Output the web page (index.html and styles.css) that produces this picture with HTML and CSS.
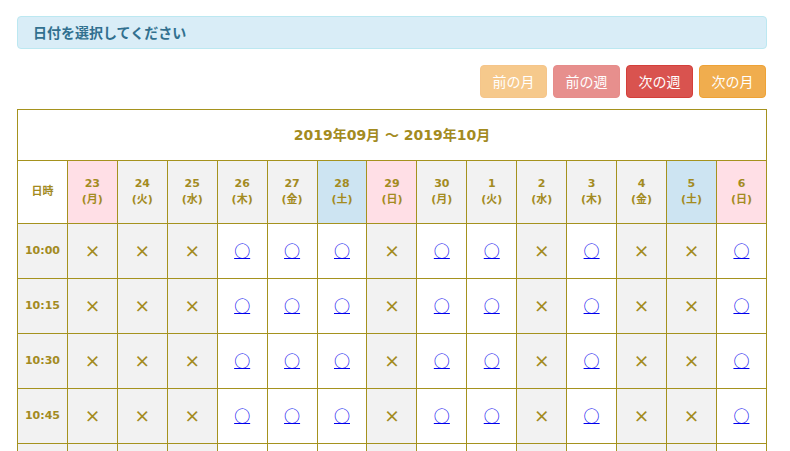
FILE: index.html
```html
<!DOCTYPE html>
<html lang="ja">
<head>
<meta charset="utf-8">
<link rel="stylesheet" href="styles.css">
</head>
<body>
<div class="page">
  <div class="alert">日付を選択してください</div>
  <div class="nav">
    <span class="btn btn-prev-month">前の月</span>
    <span class="btn btn-prev-week">前の週</span>
    <span class="btn btn-next-week">次の週</span>
    <span class="btn btn-next-month">次の月</span>
  </div>
  <table class="cal">
    <tr class="title-row"><th colspan="15">2019年09月 ～ 2019年10月</th></tr>
    <tr class="head-row">
      <th class="corner">日時</th>
      <th class="hol">23<br>(月)</th>
      <th>24<br>(火)</th>
      <th>25<br>(水)</th>
      <th>26<br>(木)</th>
      <th>27<br>(金)</th>
      <th class="sat">28<br>(土)</th>
      <th class="hol">29<br>(日)</th>
      <th>30<br>(月)</th>
      <th>1<br>(火)</th>
      <th>2<br>(水)</th>
      <th>3<br>(木)</th>
      <th>4<br>(金)</th>
      <th class="sat">5<br>(土)</th>
      <th class="hol">6<br>(日)</th>
    </tr>
  </table>
</div>
<script>
(function () {
  var pattern = [0,0,0,1,1,1,0,1,1,0,1,0,0,1];
  var times = ["10:00","10:15","10:30","10:45",""];
  var table = document.querySelector(".cal");
  times.forEach(function (t) {
    var tr = document.createElement("tr");
    tr.className = "slot-row";
    var th = document.createElement("th");
    th.className = "time";
    th.textContent = t;
    tr.appendChild(th);
    pattern.forEach(function (p) {
      var td = document.createElement("td");
      if (p) {
        td.className = "open";
        if (t) {
          var a = document.createElement("a");
          a.href = "#";
          a.textContent = "○";
          td.appendChild(a);
        }
      } else {
        td.className = "closed";
        if (t) td.textContent = "×";
      }
      tr.appendChild(td);
    });
    table.appendChild(tr);
  });
})();
</script>
</body>
</html>
```

FILE: styles.css
```css
html, body {
  margin: 0;
  padding: 0;
  background: #fff;
}
body {
  font-family: "Noto Sans CJK JP", "Noto Sans", sans-serif;
  font-size: 14px;
}
.page {
  width: 750px;
  padding: 16px 0 0 17px;
}
.alert {
  background: #d9edf7;
  border: 1px solid #bce8f1;
  border-radius: 4px;
  color: #31708f;
  font-weight: bold;
  font-size: 14px;
  line-height: 17px;
  padding: 7px 15px;
}
.nav {
  display: flex;
  justify-content: flex-end;
  gap: 6px;
  margin-top: 16px;
  margin-right: 1px;
}
.btn {
  display: block;
  width: 65px;
  height: 31px;
  line-height: 31px;
  text-align: center;
  color: #fff;
  border-radius: 4px;
  font-size: 14px;
  border: 1px solid transparent;
}
.btn-prev-month { background: #f6c98c; border-color: #f5c58a; }
.btn-prev-week { background: #e78f8d; border-color: #e68c8a; }
.btn-next-week { background: #d9534f; border-color: #d43f3a; }
.btn-next-month { background: #f0ad4e; border-color: #eea236; }
.cal {
  margin-top: 11px;
  width: 750px;
  border-collapse: collapse;
  table-layout: fixed;
  color: #a38b1f;
  font-family: "DejaVu Sans", "Noto Sans CJK JP", sans-serif;
}
.cal th, .cal td {
  border: 1px solid #a5921e;
  text-align: center;
  padding: 0;
  font-weight: bold;
}
.title-row th {
  height: 47px;
  font-size: 14px;
  background: #fff;
  padding-bottom: 3px;
}
.head-row th {
  height: 62px;
  font-size: 11px;
  line-height: 16px;
  background: #f2f2f2;
  width: 49px;
}
.head-row th.corner { background: #fff; }
.head-row th.hol { background: #ffdfe6; }
.head-row th.sat { background: #cde4f2; }
.slot-row th, .slot-row td {
  height: 52px;
  padding-bottom: 2px;
}
.time {
  background: #f2f2f2;
  font-size: 11px;
}
.closed {
  background: #f2f2f2;
  font-size: 16px;
  font-family: "Noto Sans CJK JP", sans-serif;
}
.open {
  background: #fff;
}
.open a {
  color: #0000ee;
  text-decoration: underline;
  font-size: 16px;
  font-weight: normal;
  font-family: "Noto Sans CJK JP", sans-serif;
}
```
